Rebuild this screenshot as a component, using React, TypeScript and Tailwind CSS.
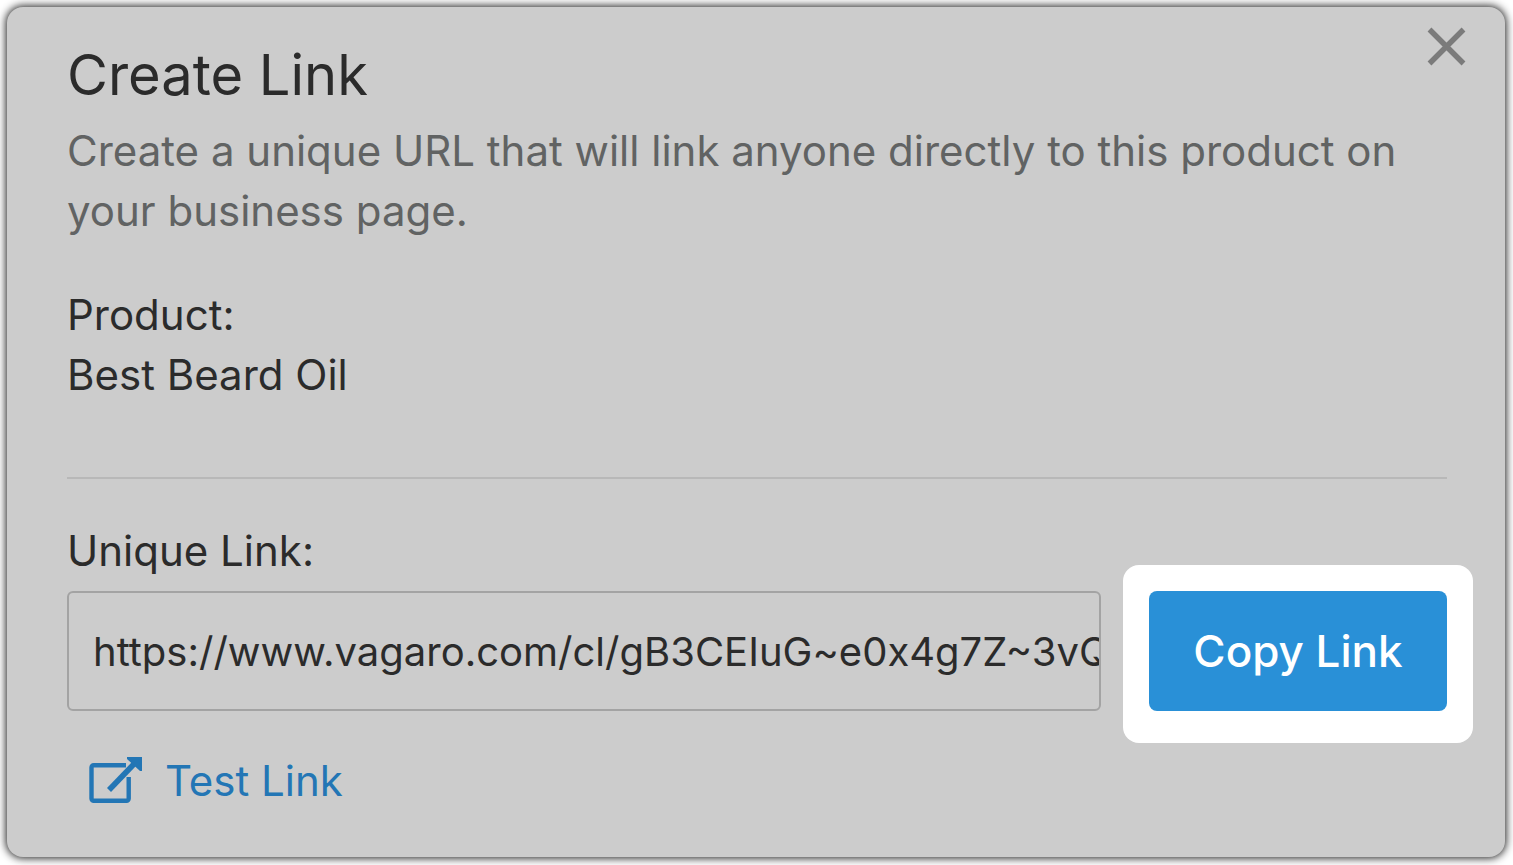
import { useState } from 'react'

const LINK = 'https://www.vagaro.com/cl/gB3CEIuG~e0x4g7Z~3vQ8kLmT'

function CloseIcon() {
  return (
    <svg width="40" height="40" viewBox="0 0 40 40" fill="none" stroke="#7b7b7b" strokeWidth="5.4" aria-hidden="true">
      <path d="M3.5 2.5l34 34M37.5 2.5l-34 34" />
    </svg>
  )
}

function ExternalIcon() {
  return (
    <svg width="54" height="48" viewBox="0 0 54 48" fill="none" stroke="#2376b5" strokeWidth="4.4" aria-hidden="true">
      <path d="M37 8.2H4.7a2.2 2.2 0 0 0-2.2 2.2v31.2a2.2 2.2 0 0 0 2.2 2.2h32.8a2.2 2.2 0 0 0 2.2-2.2V20" />
      <path d="M20 33L45 7" strokeWidth="5.6" />
      <path d="M38 0h15v14h-2L38 2z" fill="#2376b5" stroke="none" />
    </svg>
  )
}

export default function App() {
  const [url] = useState(LINK)

  return (
    <div className="min-h-screen bg-white p-[7px] pr-2 font-['Inter',sans-serif] text-[42px] leading-[60px] text-[#2b2b2b]">
      <main className="relative rounded-2xl bg-[#ccc] px-[60px] pt-8 pb-[46px] pr-[58px] shadow-[0_0_8px_1px_rgba(0,0,0,0.9)]">
        <button type="button" aria-label="Close" className="absolute top-5 right-[39px]">
          <CloseIcon />
        </button>

        <h1 className="text-[56px] leading-[72px]">Create Link</h1>
        <p className="mt-[10px] text-[#616363]">
          Create a unique URL that will link anyone directly to this product on your business page.
        </p>

        {/* product */}
        <dl className="mt-11">
          <dt>Product:</dt>
          <dd>Best Beard Oil</dd>
        </dl>

        <hr className="mt-[72px] mb-[42px] border-t-2 border-[#b8b8b8]" />

        {/* link + copy */}
        <label htmlFor="unique-link" className="block">Unique Link:</label>
        <div className="mt-[10px] flex items-start gap-[22px]">
          <input
            id="unique-link"
            type="text"
            readOnly
            value={url}
            className="h-[120px] min-w-0 flex-1 rounded-md border-2 border-[#a3a3a3] bg-transparent pl-6 text-[40px] outline-none"
          />
          <div className="-mt-[26px] -mr-[26px] -mb-8 rounded-2xl bg-white p-[26px] pb-8">
            <button type="button" className="h-[120px] w-[298px] rounded-lg bg-[#2990d7] text-[44px] font-medium text-white">
              Copy Link
            </button>
          </div>
        </div>

        <a href="#test" className="mt-10 ml-[22px] inline-flex items-center gap-[22px] align-top text-[#2376b5]">
          <ExternalIcon />
          Test Link
        </a>
      </main>
    </div>
  )
}
